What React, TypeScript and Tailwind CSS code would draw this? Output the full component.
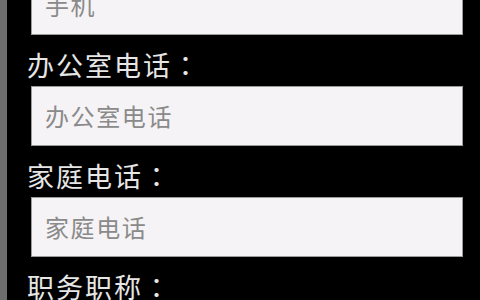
const fields = [
  { label: null, placeholder: '手机' },
  { label: '办公室电话', placeholder: '办公室电话' },
  { label: '家庭电话', placeholder: '家庭电话' },
  { label: '职务职称', placeholder: '职务职称' },
]

const font = { fontFamily: '"Noto Sans CJK SC", "Noto Sans", sans-serif' }

function Field({ label, placeholder }: { label: string | null; placeholder: string }) {
  return (
    <div className="flex flex-col">
      {label && (
        <div className="h-[51px] pt-[15px] pl-[27px] text-[27px] leading-[30px] tracking-[2px] text-[#e6e6e6] whitespace-nowrap">
          {label}
          <span className="inline-block w-[29px] text-center" style={{ fontFamily: '"Noto Sans CJK TC", sans-serif' }}>
            ：
          </span>
        </div>
      )}
      <div className="ml-[31px] w-[432px] h-[60px] flex items-center border border-[#9c9c9c] bg-[#f5f3f5] pl-[13px] text-[24px] tracking-[1.6px] text-[#8a8a8a]">
        {placeholder}
      </div>
    </div>
  )
}

export default function App() {
  return (
    <div className="w-[480px] h-[300px] overflow-hidden flex bg-black" style={font}>
      <div className="w-[7px] shrink-0 bg-[#6e6e6e]" />
      <div className="flex-1 -ml-[7px] -mt-[25px] flex flex-col">
        {fields.map((f) => (
          <Field key={f.placeholder} label={f.label} placeholder={f.placeholder} />
        ))}
      </div>
    </div>
  )
}
